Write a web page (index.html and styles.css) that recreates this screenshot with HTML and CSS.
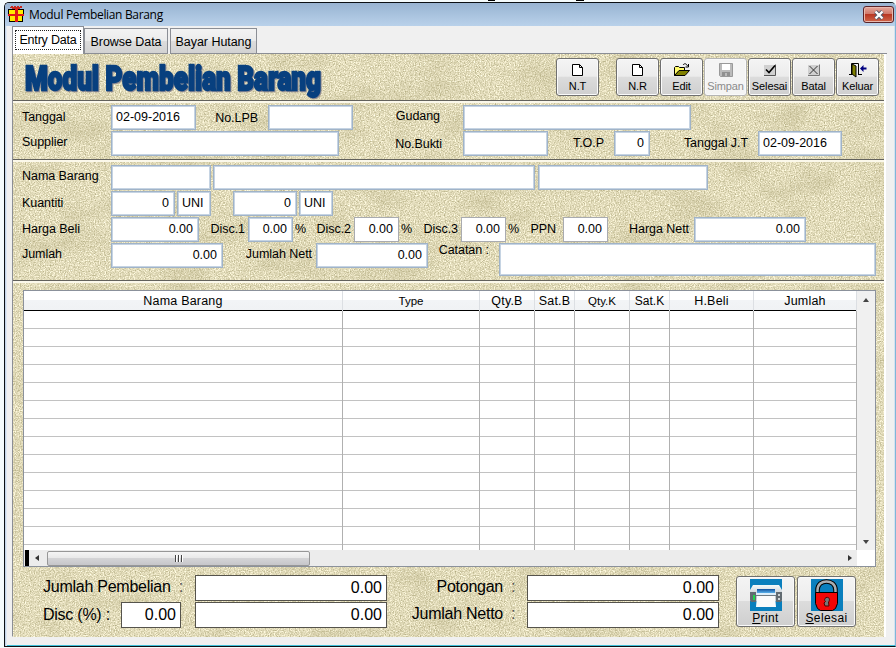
FILE: index.html
```html
<!DOCTYPE html>
<html lang="id">
<head>
<meta charset="utf-8">
<title>Modul Pembelian Barang</title>
<link rel="stylesheet" href="styles.css">
</head>
<body>
<div class="window">
  <header class="titlebar">
    <svg class="gift" width="17" height="18" viewBox="0 0 17 18" shape-rendering="crispEdges">
      <path d="M3 0h2v1h1v-1h2v1h1v-1h2v1h1v-1h2v2h-2v2h-8v-2h-2z" fill="#c8281e"/>
      <path d="M0 3h16v6h-1v7h-14v-7h-1z" fill="#000"/>
      <path d="M1 4h14v4h-14zM2 10h12v5h-12z" fill="#ffec00"/>
      <path d="M7 3h3v13h-3zM0 8h16v2h-16z" fill="#e11818"/>
    </svg>
    <span class="caption">Modul Pembelian Barang</span>
    <button class="close" aria-label="Tutup">
      <svg width="12" height="10" viewBox="0 0 12 10"><path d="M2.5 1.5l7 7M9.500 1.500l-7 7" stroke="#555a6b" stroke-width="4"/><path d="M2.500 1.500l7 7M9.500 1.500l-7 7" stroke="#fff" stroke-width="2.300"/></svg>
    </button>
  </header>
  <nav class="tabs">
    <span class="tab active"><span>Entry Data</span></span>
    <span class="tab browse">Browse Data</span>
    <span class="tab hutang">Bayar Hutang</span>
    <span class="rest"></span>
  </nav>
  <main class="panel">
    <svg class="texture" width="871" height="583" aria-hidden="true">
      <filter id="grain" x="0" y="0" width="100%" height="100%" color-interpolation-filters="sRGB">
        <feTurbulence type="fractalNoise" baseFrequency="0.8" numOctaves="2" seed="4" result="n"/>
        <feColorMatrix in="n" type="matrix" values="0.5 0 0 0 0.635  0.5 0 0 0 0.610  0.6 0 0 0 0.430  0 0 0 0 1" result="fine"/>
        <feTurbulence type="fractalNoise" baseFrequency="0.02 0.035" numOctaves="3" seed="9" result="m"/>
        <feColorMatrix in="m" type="matrix" values="0 0 0 0 0.70  0 0 0 0 0.67  0 0 0 0 0.50  0.8 0 0 0 -0.37" result="veins"/>
        <feMerge><feMergeNode in="fine"/><feMergeNode in="veins"/></feMerge>
      </filter>
      <rect width="871" height="583" filter="url(#grain)"/>
    </svg>

    <section class="head">
      <svg class="heading" width="306" height="40" role="heading">
        <text x="3" y="32" textLength="296" lengthAdjust="spacingAndGlyphs">Modul Pembelian Barang</text>
      </svg>
      <div class="tools">
        <button class="tool first"><svg width="16" height="16" viewBox="0 0 16 16"><path d="M2.500 2.500h7l3 3v8h-10zM9.500 2.500v3h3" fill="#fff" stroke="#000"/></svg>N.T</button>
        <button class="tool"><svg width="16" height="16" viewBox="0 0 16 16"><path d="M2.500 2.500h7l3 3v8h-10zM9.500 2.500v3h3" fill="#fff" stroke="#000"/></svg>N.R</button>
        <button class="tool"><svg width="16" height="16" viewBox="0 0 16 16"><path d="M.5 13.500v-8l1-1h3l1 1h5v3h-5z" fill="#fffb6b" stroke="#000"/><path d="M.5 13.500l4.500-5h10.500l-4.500 5z" fill="#808000" stroke="#000"/><path d="M9 3c1.500-2 3.500-1.500 4.500 1M14.500 2v3h-3" fill="none" stroke="#000"/></svg>Edit</button>
        <button class="tool disabled"><svg width="16" height="16" viewBox="0 0 16 16"><path d="M1.500 1.500h13v13h-12l-1-1z" fill="#bbb" stroke="#999"/><path d="M4 2h8v6h-8zM9 11h2v3h-2z" fill="#fff"/><path d="M4 10h8v4h-3v-3h-2v3h-3z" fill="#909090"/></svg>Simpan</button>
        <button class="tool"><svg width="16" height="16" viewBox="0 0 16 16"><path d="M2 3h11v10h-11z" fill="#d0d0d0"/><path d="M2 13.500h11.500v-11" fill="none" stroke="#555"/><path d="M4 7.500l3 3 6-7" fill="none" stroke="#000" stroke-width="1.600"/></svg>Selesai</button>
        <button class="tool"><svg width="16" height="16" viewBox="0 0 16 16"><path d="M2 3h11v10h-11z" fill="#d0d0d0"/><path d="M2 13.500h11.500v-11" fill="none" stroke="#777"/><path d="M3.500 4l8 8M11.500 4l-8 8" fill="none" stroke="#333"/></svg>Batal</button>
        <button class="tool"><svg width="18" height="16" viewBox="0 0 18 16"><path d="M2.500 12.500v-11h7v11M0 12.500h3M9 12.500h4" fill="none" stroke="#000"/><path d="M3 2l4 2v11l-4-3z" fill="#808000" stroke="#000"/><path d="M11 6.500l3.500-3.500v2.500h3v2h-3v2.500z" fill="#000080"/></svg>Keluar</button>
      </div>
    </section>

    <section class="doc">
      <div class="row doc1">
        <label class="up1">Tanggal</label><span class="field">02-09-2016</span>
        <label class="r11">No.LPB</label><span class="field"></span>
        <label class="r23 up2">Gudang</label><span class="field"></span>
      </div>
      <div class="row doc2">
        <label class="up2">Supplier</label><span class="field"></span>
        <label class="r21">No.Bukti</label><span class="field"></span>
        <label class="r11 up1">T.O.P</label><span class="field num">0</span>
        <label class="r11 up1">Tanggal J.T</label><span class="field">02-09-2016</span>
      </div>
    </section>

    <section class="item">
      <div class="row item1">
        <label class="up2">Nama Barang</label><span class="field"></span><i></i><span class="field"></span><i></i><span class="field"></span>
      </div>
      <div class="row item2">
        <label class="up1">Kuantiti</label><span class="field num">0</span><i></i><span class="field">UNI</span><i></i><span class="field num">0</span><i></i><span class="field">UNI</span>
      </div>
      <div class="row item3">
        <label class="up1">Harga Beli</label><span class="field num">0.00</span>
        <label class="r3 up1">Disc.1</label><span class="field num">0.00</span>
        <label class="pair up1"><span>%</span><span>Disc.2</span></label><span class="field num grey">0.00</span>
        <label class="pair up1"><span>%</span><span>Disc.3</span></label><span class="field num grey">0.00</span>
        <label class="pair ppn up1"><span>%</span><span>PPN</span></label><span class="field num grey">0.00</span>
        <label class="r6 up1">Harga Nett</label><span class="field num">0.00</span>
      </div>
      <div class="row item4">
        <label class="up2">Jumlah</label><span class="field num">0.00</span>
        <label class="r4 up2">Jumlah Nett</label><span class="field num">0.00</span>
        <label class="r11 up10">Catatan :</label><span class="field note"></span>
      </div>
    </section>

    <section class="list">
      <div class="grid">
        <div class="sheet">
          <div class="cols names">
            <span>Nama Barang</span><span class="small">Type</span><span>Qty.B</span><span>Sat.B</span><span class="small">Qty.K</span><span class="small2">Sat.K</span><span>H.Beli</span><span>Jumlah</span>
          </div>
          <div class="cols cells"><i></i><i></i><i></i><i></i><i></i><i></i><i></i><i></i></div>
        </div>
        <div class="vbar"><span class="arrow upward"></span><span class="arrow downward"></span></div>
        <div class="hbar"><b></b><span class="arrow left"></span><span class="thumb"><i></i><i></i><i></i></span><span class="arrow right"></span></div>
      </div>
    </section>

    <footer class="totals">
      <div class="lines">
        <div class="line">
          <label class="sum">Jumlah Pembelian<span>:</span></label><span class="total">0.00</span>
          <label class="sum net">Potongan<span>:</span></label><span class="total">0.00</span>
        </div>
        <div class="line second">
          <label class="disc">Disc (%) :</label><span class="total pct">0.00</span><span class="total">0.00</span>
          <label class="sum net">Jumlah Netto<span>:</span></label><span class="total">0.00</span>
        </div>
      </div>
      <div class="actions">
        <button class="action">
          <svg width="32" height="32" viewBox="0 0 32 32">
            <defs>
              <linearGradient id="lid" x2="0" y2="1"><stop offset="0" stop-color="#f4f8fa"/><stop offset="1" stop-color="#a9b4bb"/></linearGradient>
              <linearGradient id="slot" x2="0" y2="1"><stop offset="0" stop-color="#0f4f9c"/><stop offset="1" stop-color="#59b0ea"/></linearGradient>
            </defs>
            <path d="M0 0h32v32h-32z" fill="#0a7fbd"/>
            <path d="M3 6h26l3 5v11h-32v-11z" fill="url(#lid)"/>
            <path d="M0 13h6v10h-5l-1-2zM26 13h6v8l-1 2h-5z" fill="#626b71"/>
            <path d="M7 10h18v4h-18z" fill="url(#slot)"/>
            <path d="M6 14h20v2h-20z" fill="#dceefa"/>
            <path d="M6 16h20v1h-20z" fill="#6d7a83"/>
            <path d="M7 17h18l1 11h-20z" fill="#fafafa"/>
            <path d="M3 16h2v5h-2z" fill="#20d44c"/><path d="M28 15h2v2h-2zM28 19h2v2h-2z" fill="#ccd3d6"/>
          </svg>
          <span><u>P</u>rint</span>
        </button>
        <button class="action">
          <svg width="32" height="32" viewBox="0 0 32 32">
            <path d="M0 0h32v32h-32z" fill="#0a7fbd"/>
            <path d="M6.500 14v-3c0-11.500 18-11.500 18 0v3" fill="none" stroke="#000" stroke-width="4.500"/>
            <path d="M6.500 14v-3c0-11.500 18-11.500 18 0v3" fill="none" stroke="#a9adb0" stroke-width="2.500"/>
            <path d="M4.500 13.500h22v11l-2 5-3 2h-12l-3-2-2-5z" fill="#f40505" stroke="#000"/>
            <path d="M15 18.500c4-1 4 3 2.500 4.500l.5 4h-4l-1-3 1.500-1.500c-1.500-1-1-3 .5-4z" fill="#777" stroke="#500000"/>
          </svg>
          <span><u>S</u>elesai</span>
        </button>
      </div>
    </footer>
  </main>
</div>
</body>
</html>
```
FILE: styles.css
```css
* { box-sizing: border-box; }
body {
  margin: 0;
  width: 896px;
  height: 648px;
  overflow: hidden;
  background:
    linear-gradient(#000, #000) 488px 0 / 7px 1px no-repeat,
    linear-gradient(#000, #000) 576px 0 / 8px 1px no-repeat,
    #f4fbfc;
  font: 12.5px/16px "Liberation Sans", Arial, sans-serif;
  color: #000;
}
button { font: inherit; color: inherit; padding: 0; margin: 0; }
.window {
  width: 892px;
  height: 645px;
  margin: 2px 0 0 4px;
  border: 1px solid #0b1014;
  border-right-color: #7fb6d8;
  border-radius: 5px 5px 0 0;
  background: #f0f0f0;
  box-shadow: inset 1px 0 #c3d5e8, inset 2px 0 #dfe9f4, inset 0 -1px #3fc0d8, inset -1px 0 #d5e2f0;
}
.titlebar {
  height: 23px;
  display: flex;
  align-items: center;
  padding: 0 1px 0 3px;
  border-radius: 4px 4px 0 0;
  background: linear-gradient(#98b4d2, #b9d1ea);
}
.caption {
  margin-left: 4px;
  flex: 1;
  font: 12px/16px "Open Sans", "Noto Sans", sans-serif;
  letter-spacing: -.33px;
}
.close {
  width: 31px;
  height: 17px;
  display: flex;
  align-items: center;
  justify-content: center;
  border: 1px solid #5a2429;
  border-radius: 3px;
  background: linear-gradient(#e5a89c, #d0796b 45%, #b93723 50%, #d0664a);
  box-shadow: inset 0 0 0 1px #e9b9ae;
}
.tabs { height: 28px; display: flex; align-items: flex-end; padding: 0 8px 0 7px; }
.tab {
  height: 26px;
  padding: 5px 0 0;
  text-align: center;
  letter-spacing: -.05px;
  border: 1px solid #8b8e95;
  background: linear-gradient(#f3f3f3, #ebebeb 50%, #dcdcdc 52%, #d2d2d2);
}
.tab.active { width: 72px; height: 28px; padding: 3px 2px 2px; border-bottom: 0; background: #fff; letter-spacing: -.2px; }
.tab.active span { display: block; height: 20px; line-height: 18px; border: 1px dotted #222; }
.browse { width: 84px; }
.hutang { width: 87px; margin-left: 2px; }
.rest { flex: 1; border-bottom: 1px solid #8b8e95; }

.panel {
  width: 874px;
  height: 583px;
  margin-left: 7px;
  position: relative;
  isolation: isolate;
  border-left: 1px solid #8b8e95;
  border-right: 2px solid #fff;
  border-bottom: 1px solid #fff;
}
.texture { position: absolute; inset: 0; z-index: -1; }
.head, .doc, .item { border-bottom: 1px solid #62615c; }
.doc, .item, .list { border-top: 2px solid #fbf8ea; }
.head { height: 47px; display: flex; justify-content: space-between; padding: 4px 5px 0 9px; }
.heading { overflow: visible; }
.heading text {
  font: 900 34px Roboto, sans-serif;
  fill: #08407f;
  stroke: #08407f;
  stroke-width: 2.3px;
  filter: drop-shadow(1px 1px #948e93);
}
.tools { display: flex; gap: 1px; }
.tool {
  width: 43px;
  height: 38px;
  display: flex;
  flex-direction: column;
  align-items: center;
  padding-top: 3px;
  border: 1px solid #707070;
  border-radius: 3px;
  background: linear-gradient(#f4f4f4, #ececec 48%, #dcdcdc 50%, #cfcfcf);
  box-shadow: inset 0 0 0 1px #fafafa;
  font-size: 11px;
  line-height: 16px;
  letter-spacing: -.1px;
}
.tool.first { margin-right: 16px; }
.tool.disabled { color: #8b8b8b; border-color: #b5b5b5; background: #f4f4f4; }

.row { display: grid; grid-template-rows: 25px; height: 25px; margin-bottom: 1px; padding-left: 9px; align-items: center; }
.row label { white-space: nowrap; letter-spacing: -.05px; }
.field {
  height: 25px;
  padding: 0 4px;
  line-height: 22px;
  border: 1px solid #a0b3c8;
  box-shadow: inset 0 0 0 1px #c6d4e3;
  background: #fff;
}
.field.grey { border-color: #a9abb0; box-shadow: none; }
.num { text-align: right; padding-right: 5px; }
.doc { height: 59px; padding-top: 2px; }
.item { height: 121px; padding-top: 3px; }
.doc1 { grid-template-columns: 89px 85px 72px 85px 110px 228px; }
.doc2 { grid-template-columns: 89px 228px 124px 85px 66px 36px 108px 84px; }
.item1 { grid-template-columns: 89px 100px 2px 322px 3px 170px; }
.item2 { grid-template-columns: 89px 64px 2px 34px 22px 64px 2px 34px; }
.item3 { grid-template-columns: 89px 88px 49px 45px 61px 45px 62px 45px 57px 45px 86px 112px; }
.item4 { grid-template-columns: 89px 112px 93px 112px 71px 377px; }
.note { align-self: start; height: 33px; }
.r3, .r4, .r6, .r11, .r21, .r23 { text-align: right; }
.r3 { padding-right: 3px; }
.r4 { padding-right: 4px; }
.r6 { padding-right: 5px; }
.r11 { padding-right: 10px; }
.r21 { padding-right: 21px; }
.r23 { padding-right: 23px; }
.up1 { padding-bottom: 2px; }
.up2 { padding-bottom: 4px; }
.up10 { padding-bottom: 12px; }
.pair { display: flex; justify-content: space-between; padding: 0 3px 2px 2px; }
.pair.ppn { padding-right: 7px; }

.list { padding: 7px 0 0 10px; }
.grid {
  width: 853px;
  height: 277px;
  display: grid;
  grid-template: 259px 16px / 833px 18px;
  border: 1px solid #8b919b;
  background: #fff;
}
.cols { display: grid; grid-template-columns: 319px 137px 55px 40px 55px 40px 84px 103px; }
.names {
  height: 20px;
  border-bottom: 1px solid #000;
  background: linear-gradient(#fff 45%, #f2f4f6 50%, #f0f2f4);
  text-align: center;
  line-height: 20px;
  letter-spacing: .2px;
}
.names span { border-right: 1px solid #dcdfe3; }
.small { font-size: 11.5px; letter-spacing: 0; }
.small2 { font-size: 12px; letter-spacing: 0; }
.cells {
  height: 239px;
  background: repeating-linear-gradient(transparent 0 17px, #c2c2c2 17px 18px);
}
.cells i { border-right: 1px solid #b0b0b0; }
.vbar { display: flex; flex-direction: column; justify-content: space-between; align-items: center; padding: 7px 0 6px; background: #f0f0f0; }
.hbar { display: flex; align-items: center; width: 833px; padding: 0 5px 0 1px; background: #ececec; }
.hbar b { width: 4px; height: 16px; background: #000; }
.arrow { border: 3px solid transparent; }
.upward { border-bottom: 4px solid #444; border-top: 0; }
.downward { border-top: 4px solid #444; border-bottom: 0; }
.left { border-right: 4px solid #333; border-left: 0; margin-left: 6px; }
.right { border-left: 4px solid #333; border-right: 0; margin-left: auto; }
.thumb {
  width: 263px;
  height: 15px;
  margin-left: 8px;
  display: flex;
  gap: 1px;
  align-items: center;
  justify-content: center;
  border: 1px solid #979797;
  border-radius: 2px;
  background: linear-gradient(#f5f5f5, #e9e9e9 45%, #d4d4d6 50%, #c6c6ca);
}
.thumb i { width: 2px; height: 7px; border-left: 1px solid #444; background: #fff; }

.totals { display: flex; padding-top: 8px; font-size: 16px; line-height: 20px; }
.lines { width: 723px; }
.line { display: flex; height: 26px; margin-bottom: 1px; align-items: center; padding-left: 30px; }
.line label { white-space: nowrap; letter-spacing: -.25px; }
.total { width: 192px; height: 26px; padding: 2px 4px; text-align: right; border: 1px solid #55534c; background: #fff; }
.total.pct { width: 60px; margin-right: 14px; }
.sum { width: 152px; display: flex; padding-bottom: 2px; }
.sum span { margin-left: auto; padding-right: 12px; color: #555; }
.sum.net { width: 140px; justify-content: flex-end; }
.sum.net span { width: 24px; margin-left: 0; padding-left: 8px; padding-right: 0; }
.disc { width: 78px; }
.actions { display: flex; gap: 2px; padding-top: 1px; }
.action {
  width: 59px;
  height: 51px;
  padding-top: 2px;
  display: flex;
  flex-direction: column;
  align-items: center;
  border: 1px solid #707070;
  border-radius: 3px;
  background: linear-gradient(#f4f4f4, #ececec 48%, #dcdcdc 50%, #cfcfcf);
  box-shadow: inset 0 0 0 1px #fafafa;
  font-size: 12px;
  line-height: 15px;
  letter-spacing: .4px;
}
.action svg { flex: none; }
```
